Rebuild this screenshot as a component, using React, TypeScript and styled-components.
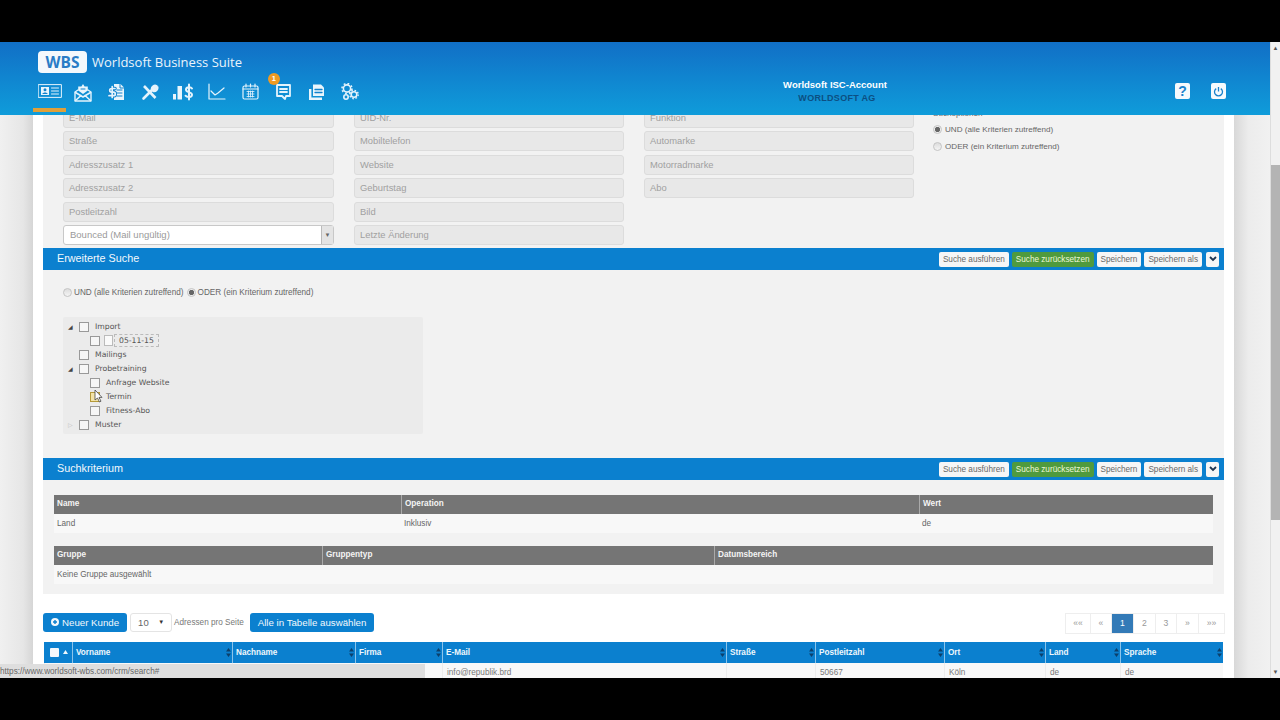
import * as React from 'react';
import styled, { createGlobalStyle } from 'styled-components';

const GlobalStyle = createGlobalStyle`
  html, body { margin: 0; padding: 0; background: #000; }
  body { font-family: "Liberation Sans", Arial, sans-serif; overflow: hidden; }
  * { box-sizing: border-box; }
`;

const Screen = styled.div`
  width: 1280px;
  height: 720px;
  background: #000;
  padding: 42px 0;
`;

const Page = styled.div`
  position: relative;
  height: 636px;
  overflow: hidden;
  display: grid;
  grid-template-columns: 1270px 10px;
  background: #f1f1f1;
`;

const Main = styled.div`
  display: flex;
  flex-direction: column;
  height: 636px;
  overflow: hidden;
`;

const Header = styled.header`
  position: relative;
  z-index: 2;
  flex: none;
  height: 73px;
  display: flex;
  background: linear-gradient(#116fc6, #0f9cda);
`;

const Brand = styled.div`
  width: 735px;
  padding: 9px 0 0 33px;
`;

const LogoRow = styled.div`
  display: flex;
  align-items: center;
  gap: 5px;
  height: 22px;
  padding-left: 5px;
`;

const LogoBadge = styled.div`
  width: 49px;
  height: 22px;
  border-radius: 4px;
  background: #f4f8fc;
  color: #2a7cc6;
  font: 700 15.5px/22px "Open Sans", sans-serif;
  text-align: center;
`;

const LogoTitle = styled.div`
  color: #eaf4fb;
  font: 400 13px/22px "Open Sans", sans-serif;
`;

const Nav = styled.nav`
  display: flex;
  margin-top: 7px;
`;

const NavItem = styled.div<{ $active?: boolean }>`
  position: relative;
  width: 33.4px;
  height: 32px;
  padding-top: 3px;
  display: flex;
  justify-content: center;
  align-items: flex-start;
  border-bottom: 4px solid ${props => (props.$active ? '#dfa03a' : 'transparent')};
`;

const Badge = styled.span`
  position: absolute;
  left: 1px;
  top: -7px;
  width: 12px;
  height: 12px;
  border-radius: 50%;
  background: #ef9a22;
  color: #fff;
  font: 700 7.5px/12px "Liberation Sans", sans-serif;
  text-align: center;
`;

const Account = styled.div`
  width: 200px;
  padding-top: 37px;
  text-align: center;
`;

const AccountName = styled.div`
  color: #fff;
  font-size: 9.5px;
  font-weight: 700;
  line-height: 12px;
`;

const AccountCompany = styled.div`
  margin-top: 1px;
  padding-left: 4px;
  color: #0c4f82;
  font-size: 9px;
  font-weight: 700;
  line-height: 12px;
  letter-spacing: 0.3px;
`;

const HeaderActions = styled.div`
  margin-left: auto;
  padding: 41px 44px 0 0;
  display: flex;
  align-items: flex-start;
  gap: 21px;
`;

const HeaderAction = styled.div`
  width: 15px;
  height: 16px;
  border-radius: 2px;
  background: #f6fafd;
  color: #1b82cc;
  display: flex;
  align-items: center;
  justify-content: center;
  font-size: 14px;
  font-weight: 700;
`;

const Body = styled.div`
  flex: 1;
  display: grid;
  grid-template-columns: 33px 1201px 36px;
`;

const LeftGutter = styled.div`
  background: linear-gradient(to right, #f0f0f0, #e6e6e6 70%, #d6d6d6);
`;

const RightGutter = styled.div`
  background: linear-gradient(to right, #d8d8d8, #ececec 40%, #f1f1f1);
`;

const Panel = styled.main`
  background: #fff;
  padding: 0 10px;
`;

const FormArea = styled.div`
  background: #f2f2f2;
  margin-top: -7px;
  padding: 0 0 3px 20px;
  display: grid;
  grid-template-columns: 271px 270px 270px 1fr;
  column-gap: 20px;
  align-items: start;
`;

const FieldColumn = styled.div`
  display: flex;
  flex-direction: column;
  gap: 3.4px;
`;

const Field = styled.div`
  height: 20px;
  padding-left: 5px;
  border: 1px solid #dcdcdc;
  border-radius: 3px;
  background: #e8e8e8;
  color: #a0a0a0;
  font-size: 9.4px;
  line-height: 18px;
`;

const SelectField = styled.div`
  height: 20px;
  display: flex;
  border: 1px solid #c8c8c8;
  border-radius: 3px;
  background: #fff;
  color: #9a9a9a;
  font-size: 9.5px;
  line-height: 18px;
`;

const SelectText = styled.div`
  flex: 1;
  padding-left: 6px;
`;

const SelectArrow = styled.div`
  width: 12px;
  border-left: 1px solid #bbb;
  background: #e4e4e4;
  color: #666;
  font-size: 6px;
  text-align: center;
`;

const OptionColumn = styled.div`
  margin-left: -1px;
  color: #666;
  font-size: 8.1px;
`;

const OptionTitle = styled.div`
  height: 13px;
  line-height: 11px;
`;

const OptionRow = styled.div`
  display: flex;
  align-items: center;
  gap: 3px;
  height: 17px;
`;

const Radio = styled.span<{ $checked?: boolean }>`
  flex: none;
  width: 9px;
  height: 9px;
  border-radius: 50%;
  border: 1px solid #c4c4c4;
  background: ${props =>
    props.$checked
      ? 'radial-gradient(circle, #666 0, #666 2.2px, #eee 3px)'
      : 'linear-gradient(#ddd, #f4f4f4)'};
`;

const SectionBar = styled.div`
  height: 22px;
  padding: 0 5px 0 14px;
  display: flex;
  align-items: center;
  justify-content: space-between;
  background: #0b80cf;
  color: #f2f8fc;
  font-size: 10.8px;
`;

const SectionTitle = styled.span`
  margin-bottom: 2px;
`;

const BarActions = styled.div`
  display: flex;
  gap: 3px;
  margin-top: 1px;
`;

const BarButton = styled.div<{ $variant?: 'green' }>`
  height: 15px;
  padding: 0 4px;
  border-radius: 2px;
  background: ${props => (props.$variant === 'green' ? '#4f9a3e' : '#f6f6f6')};
  color: ${props => (props.$variant === 'green' ? '#f0f7d8' : '#666')};
  font-size: 8.2px;
  line-height: 15px;
  white-space: nowrap;
`;

const BarCaret = styled.div`
  width: 13px;
  height: 15px;
  margin-left: 1px;
  border-radius: 2px;
  background: #f6f6f6;
  display: flex;
  align-items: center;
  justify-content: center;
`;

const SectionBody = styled.div`
  height: 188px;
  background: #f2f2f2;
  padding: 17px 20px 0;
`;

const LogicRow = styled.div`
  display: flex;
  align-items: center;
  gap: 2px;
  height: 12px;
  color: #666;
  font-size: 8.2px;
`;

const LogicLabel = styled.span`
  margin-right: 1px;
`;

const TreeBox = styled.div`
  position: relative;
  width: 360px;
  height: 117px;
  margin-top: 18px;
  padding-top: 3px;
  border-radius: 2px;
  background: #ebebeb;
`;

const TreeRow = styled.div<{ $level: number }>`
  display: flex;
  align-items: center;
  height: 14px;
  padding-left: ${props => 5 + props.$level * 11}px;
  color: #555;
  font-family: "DejaVu Sans", sans-serif;
  font-size: 7.7px;
  line-height: 16px;
`;

const TreeArrow = styled.span<{ $open?: boolean }>`
  flex: none;
  width: 11px;
  color: ${props => (props.$open ? '#444' : '#bbb')};
  font-size: 6px;
`;

const TreeCheck = styled.span<{ $hover?: boolean }>`
  flex: none;
  width: 10px;
  height: 10px;
  margin-right: 6px;
  border: 1px solid ${props => (props.$hover ? '#b59a3a' : '#999')};
  background: ${props => (props.$hover ? '#f2e3a8' : '#f6f6f6')};
`;

const TreeFile = styled.span`
  flex: none;
  width: 9px;
  height: 11px;
  margin: 0 1px 0 -2px;
  border: 1px solid #bbb;
  background: #fafafa;
`;

const TreeSelected = styled.span`
  padding: 0 4px;
  border: 1px dashed #bbb;
  line-height: 11px;
`;

const Pointer = styled.svg`
  position: absolute;
  left: 31px;
  top: 72px;
`;

const CriteriaBody = styled.div`
  background: #f2f2f2;
  padding: 15px 11px 10px;
  display: flex;
  flex-direction: column;
  gap: 13px;
`;

const GreyHead = styled.div<{ $cols: string }>`
  display: grid;
  grid-template-columns: ${props => props.$cols};
  height: 19px;
  background: #757575;
`;

const GreyHeadCell = styled.div`
  padding-left: 3px;
  border-left: 1px solid #aaa;
  color: #f4f4f4;
  font-size: 8.2px;
  font-weight: 700;
  line-height: 18px;
  &:first-child { border-left: 0; }
`;

const InfoRow = styled.div<{ $cols: string }>`
  display: grid;
  grid-template-columns: ${props => props.$cols};
  height: 19px;
  background: #f8f8f8;
`;

const InfoCell = styled.div`
  padding-left: 3px;
  color: #666;
  font-size: 8.2px;
  line-height: 20px;
`;

const Toolbar = styled.div`
  display: flex;
  align-items: flex-start;
  justify-content: space-between;
  padding-top: 19px;
`;

const ToolGroup = styled.div`
  display: flex;
  align-items: center;
`;

const BlueButton = styled.div`
  height: 19px;
  padding: 0 8px;
  display: flex;
  align-items: center;
  gap: 3px;
  border-radius: 3px;
  background: #0b80cf;
  color: #f2f8fc;
  font-size: 9.7px;
  white-space: nowrap;
`;

const PageSize = styled.div`
  width: 42px;
  height: 19px;
  margin: 0 2px 0 3px;
  padding: 0 7px;
  display: flex;
  align-items: center;
  justify-content: space-between;
  border: 1px solid #e4e4e4;
  border-radius: 3px;
  background: #fff;
  color: #666;
  font-size: 9.5px;
`;

const PageSizeCaret = styled.span`
  color: #333;
  font-size: 6px;
`;

const ToolLabel = styled.span`
  margin-right: 6px;
  color: #777;
  font-size: 8.2px;
`;

const Pager = styled.div`
  display: flex;
  height: 21px;
  margin-right: -1px;
`;

const PagerCell = styled.div<{ $width: number; $active?: boolean }>`
  width: ${props => props.$width}px;
  border: 1px solid #eee;
  border-left-width: 0;
  background: ${props => (props.$active ? '#337ab7' : '#fff')};
  color: ${props => (props.$active ? '#fff' : '#999')};
  font-size: 8.6px;
  line-height: 19px;
  text-align: center;
  &:first-child { border-left-width: 1px; }
`;

const dataCols = '28px 160px 123px 87px 284px 89px 129px 101px 75px 103px';

const DataGrid = styled.div`
  margin: 8px 1px 0;
`;

const DataHead = styled.div`
  display: grid;
  grid-template-columns: ${dataCols};
  height: 21px;
  background: #0b80cf;
`;

const DataHeadCell = styled.div`
  padding: 0 1px 0 3px;
  display: flex;
  align-items: center;
  justify-content: space-between;
  border-left: 1px solid #8cc4ea;
  color: #eef7fc;
  font-size: 8.2px;
  font-weight: 700;
  &:first-child { border-left: 0; padding: 0 4px 0 6px; }
`;

const HeadCheck = styled.span`
  width: 9px;
  height: 9px;
  border-radius: 1px;
  background: #f4f8fc;
`;

const DataRow = styled.div`
  display: grid;
  grid-template-columns: ${dataCols};
  height: 20px;
  background: #f8f8f8;
`;

const DataCell = styled.div`
  padding-left: 4px;
  border-left: 1px solid #ececec;
  color: #777;
  font-size: 8.2px;
  line-height: 19px;
`;

const Scrollbar = styled.div`
  display: flex;
  flex-direction: column;
  align-items: center;
  height: 636px;
  background: #f1f1f1;
  border-left: 1px solid #ddd;
`;

const ScrollArrow = styled.div`
  height: 12px;
  color: #555;
  font-size: 6px;
  line-height: 12px;
`;

const ScrollThumb = styled.div`
  width: 9px;
  height: 355px;
  margin-top: 111px;
  background: #b4b4b4;
`;

const ScrollEnd = styled(ScrollArrow)`
  margin-top: auto;
`;

const StatusBar = styled.div`
  position: absolute;
  z-index: 3;
  left: 0;
  bottom: 0;
  width: 425px;
  height: 14px;
  background: #dedede;
  color: #666;
  font-size: 8.2px;
  line-height: 16px;
  overflow: hidden;
`;

const IconSvg = styled.svg`
  fill: none;
  stroke: #e4f3fc;
  stroke-width: 1.2;
  stroke-linejoin: round;
  stroke-linecap: round;
`;

const white = '#e9f5fc';
const blue = '#1182cc';

const navIcons: React.ReactNode[] = [
  <IconSvg key="card" width="24" height="16" viewBox="0 0 24 16">
    <rect x="0.6" y="1.6" width="22.8" height="12.8" strokeWidth="1" />
    <rect x="3" y="4" width="8" height="8" fill={white} stroke="none" />
    <path d="M7 5.2a1.5 1.5 0 0 1 0 3 1.5 1.5 0 0 1 0-3zM4.3 11c.5-2 5-2 5.4 0z" fill={blue} stroke="none" />
    <path d="M13.5 5h7M13.5 8h7M13.5 11h7" strokeWidth="1" />
  </IconSvg>,
  <IconSvg key="mail" width="18" height="19" viewBox="0 0 18 19">
    <path d="M1 9l3-2M17 9l-3-2M1 9v9h16V9" strokeWidth="1.4" />
    <path d="M9 1l1.6 2.4h3.2v4.2L9 11 4.2 7.6V3.4h3.2z" fill={white} stroke="none" />
    <path d="M1.5 9.5L9 14l7.5-4.5M1.5 17.5l5.5-5M16.5 17.5l-5.5-5" strokeWidth="1.6" />
    <path d="M7 6h4" stroke={blue} strokeWidth="1" />
  </IconSvg>,
  <IconSvg key="doc" width="17" height="18" viewBox="0 0 17 18">
    <path d="M6 1h6.5L16 4.5V17H6z" fill={white} stroke="none" />
    <path d="M9 7h5M9 10h5M9 13h5M12 1.5V5h3.5" stroke={blue} strokeWidth="1" />
    <path d="M7 5.5H3.5a1.8 1.8 0 0 0 0 3.6h2a1.8 1.8 0 0 1 0 3.6H1" stroke={blue} strokeWidth="3.6" />
    <path d="M7 5.5H3.5a1.8 1.8 0 0 0 0 3.6h2a1.8 1.8 0 0 1 0 3.6H1M4.2 3.5v11" strokeWidth="1.7" />
  </IconSvg>,
  <IconSvg key="tools" width="18" height="18" viewBox="0 0 18 18">
    <g strokeWidth="2.6">
      <path d="M2.5 15.5L11 7" />
      <path d="M3 3l11.5 12" strokeLinecap="butt" />
      <path d="M10.5 6.5a3.6 3.6 0 0 1 5.3-3.6L13.6 5l1 1 2-2.2a3.6 3.6 0 0 1-4.6 4.4" strokeWidth="1.6" fill={white} />
    </g>
  </IconSvg>,
  <IconSvg key="money" width="22" height="18" viewBox="0 0 22 18">
    <rect x="1" y="11" width="3" height="5.5" fill={white} stroke="none" />
    <rect x="5.5" y="3" width="4.5" height="13.5" fill={white} stroke="none" />
    <path d="M20 5.5c-1-1.6-6-2-6 1.2 0 3 6 1.8 6 5 0 3-5 3-6.5 1M17 1.5v15" strokeWidth="2" />
  </IconSvg>,
  <IconSvg key="chart" width="18" height="17" viewBox="0 0 18 17">
    <path d="M1 1v15h16" />
    <path d="M3 8l4 4 3-2 6-5" />
  </IconSvg>,
  <IconSvg key="calendar" width="17" height="17" viewBox="0 0 17 17">
    <rect x="1" y="3" width="15" height="13" rx="1.5" />
    <path d="M4 1v3M8.5 1v3M13 1v3M1 6h15" />
    <path d="M5 8.5h7M5 11h7M5 13.5h7M6.5 8v6M8.5 8v6M10.5 8v6" strokeWidth="0.8" />
  </IconSvg>,
  <IconSvg key="chat" width="17" height="18" viewBox="0 0 17 18">
    <g strokeWidth="1.8">
      <path d="M2 2h13v11h-4l-1 3-3-3H2z" />
      <path d="M5 6h7M5 9h7" />
    </g>
  </IconSvg>,
  <IconSvg key="files" width="18" height="18" viewBox="0 0 18 18">
    <path d="M1 6h2.4v8.6H14V17H1z" fill={white} stroke="none" />
    <path d="M5 1.5h8l3 3V13H5z" fill={white} stroke="none" />
    <path d="M7 6.5h7M7 9.5h7" stroke={blue} strokeWidth="1.3" />
  </IconSvg>,
  <IconSvg key="gears" width="18" height="18" viewBox="0 0 18 18">
    <g strokeLinecap="butt">
      <circle cx="6" cy="5.5" r="3.6" strokeWidth="1.6" />
      <circle cx="6" cy="5.5" r="5" strokeWidth="1.6" strokeDasharray="1.8 2.1" />
      <circle cx="13" cy="11.5" r="2.8" strokeWidth="1.6" />
      <circle cx="13" cy="11.5" r="4.2" strokeWidth="1.4" strokeDasharray="1.6 1.7" />
      <circle cx="5" cy="14" r="2.2" strokeWidth="1.6" />
    </g>
  </IconSvg>,
];

const SortIcon = () => (
  <svg width="5" height="9" viewBox="0 0 5 9">
    <path d="M2.5 0L5 3.5H0zM2.5 9L0 5.5h5z" fill="#0c3f6b" />
  </svg>
);

const CaretDown = () => (
  <svg width="8" height="6" viewBox="0 0 8 6">
    <path d="M1 1l3 3 3-3" fill="none" stroke="#1d3550" strokeWidth="1.8" />
  </svg>
);

const SectionActions = () => (
  <BarActions>
    <BarButton>Suche ausführen</BarButton>
    <BarButton $variant="green">Suche zurücksetzen</BarButton>
    <BarButton>Speichern</BarButton>
    <BarButton>Speichern als</BarButton>
    <BarCaret>
      <CaretDown />
    </BarCaret>
  </BarActions>
);

const column1 = ['E-Mail', 'Straße', 'Adresszusatz 1', 'Adresszusatz 2', 'Postleitzahl'];
const column2 = ['UID-Nr.', 'Mobiltelefon', 'Website', 'Geburtstag', 'Bild', 'Letzte Änderung'];
const column3 = ['Funktion', 'Automarke', 'Motorradmarke', 'Abo'];

const criteriaCols = '347px 518px 294px';
const groupCols = '268px 392px 499px';

const dataHeads = ['Vorname', 'Nachname', 'Firma', 'E-Mail', 'Straße', 'Postleitzahl', 'Ort', 'Land', 'Sprache'];
const dataValues = ['', '', '', '', 'info@republik.brd', '', '50667', 'Köln', 'de', 'de'];

const pager: [string, number, boolean?][] = [
  ['««', 26],
  ['«', 21],
  ['1', 22, true],
  ['2', 22],
  ['3', 21],
  ['»', 22],
  ['»»', 26],
];

export default function App() {
  return (
    <Screen>
      <GlobalStyle />
      <Page>
        <Main>
          <Header>
            <Brand>
              <LogoRow>
                <LogoBadge>WBS</LogoBadge>
                <LogoTitle>Worldsoft Business Suite</LogoTitle>
              </LogoRow>
              <Nav>
                {navIcons.map((icon, i) => (
                  <NavItem key={i} $active={i === 0}>
                    {i === 7 && <Badge>1</Badge>}
                    {icon}
                  </NavItem>
                ))}
              </Nav>
            </Brand>
            <Account>
              <AccountName>Worldsoft ISC-Account</AccountName>
              <AccountCompany>WORLDSOFT AG</AccountCompany>
            </Account>
            <HeaderActions>
              <HeaderAction>?</HeaderAction>
              <HeaderAction>
                <svg width="11" height="11" viewBox="0 0 11 11">
                  <path d="M3.2 2.6a4 4 0 1 0 4.6 0M5.5 1v4.5" fill="none" stroke="#1b82cc" strokeWidth="1.3" />
                </svg>
              </HeaderAction>
            </HeaderActions>
          </Header>
          <Body>
            <LeftGutter />
            <Panel>
              <FormArea>
                <FieldColumn>
                  {column1.map(label => (
                    <Field key={label}>{label}</Field>
                  ))}
                  <SelectField>
                    <SelectText>Bounced (Mail ungültig)</SelectText>
                    <SelectArrow>▼</SelectArrow>
                  </SelectField>
                </FieldColumn>
                <FieldColumn>
                  {column2.map(label => (
                    <Field key={label}>{label}</Field>
                  ))}
                </FieldColumn>
                <FieldColumn>
                  {column3.map(label => (
                    <Field key={label}>{label}</Field>
                  ))}
                </FieldColumn>
                <OptionColumn>
                  <OptionTitle>Suchoptionen</OptionTitle>
                  <OptionRow>
                    <Radio $checked />
                    UND (alle Kriterien zutreffend)
                  </OptionRow>
                  <OptionRow>
                    <Radio />
                    ODER (ein Kriterium zutreffend)
                  </OptionRow>
                </OptionColumn>
              </FormArea>

              <SectionBar>
                <SectionTitle>Erweiterte Suche</SectionTitle>
                <SectionActions />
              </SectionBar>
              <SectionBody>
                <LogicRow>
                  <Radio />
                  <LogicLabel>UND (alle Kriterien zutreffend)</LogicLabel>
                  <Radio $checked />
                  <LogicLabel>ODER (ein Kriterium zutreffend)</LogicLabel>
                </LogicRow>
                <TreeBox>
                  <TreeRow $level={0}>
                    <TreeArrow $open>◢</TreeArrow>
                    <TreeCheck />
                    Import
                  </TreeRow>
                  <TreeRow $level={1}>
                    <TreeArrow />
                    <TreeCheck />
                    <TreeFile />
                    <TreeSelected>05-11-15</TreeSelected>
                  </TreeRow>
                  <TreeRow $level={0}>
                    <TreeArrow />
                    <TreeCheck />
                    Mailings
                  </TreeRow>
                  <TreeRow $level={0}>
                    <TreeArrow $open>◢</TreeArrow>
                    <TreeCheck />
                    Probetraining
                  </TreeRow>
                  <TreeRow $level={1}>
                    <TreeArrow />
                    <TreeCheck />
                    Anfrage Website
                  </TreeRow>
                  <TreeRow $level={1}>
                    <TreeArrow />
                    <TreeCheck $hover />
                    Termin
                  </TreeRow>
                  <TreeRow $level={1}>
                    <TreeArrow />
                    <TreeCheck />
                    Fitness-Abo
                  </TreeRow>
                  <TreeRow $level={0}>
                    <TreeArrow>▷</TreeArrow>
                    <TreeCheck />
                    Muster
                  </TreeRow>
                  <Pointer width="9" height="14" viewBox="0 0 9 14">
                    <path d="M1 1v10l2.5-2 2 4 1.5-.8-2-3.8h3z" fill="#fff" stroke="#444" strokeWidth="0.8" />
                  </Pointer>
                </TreeBox>
              </SectionBody>

              <SectionBar>
                <SectionTitle>Suchkriterium</SectionTitle>
                <SectionActions />
              </SectionBar>
              <CriteriaBody>
                <div>
                  <GreyHead $cols={criteriaCols}>
                    <GreyHeadCell>Name</GreyHeadCell>
                    <GreyHeadCell>Operation</GreyHeadCell>
                    <GreyHeadCell>Wert</GreyHeadCell>
                  </GreyHead>
                  <InfoRow $cols={criteriaCols}>
                    <InfoCell>Land</InfoCell>
                    <InfoCell>Inklusiv</InfoCell>
                    <InfoCell>de</InfoCell>
                  </InfoRow>
                </div>
                <div>
                  <GreyHead $cols={groupCols}>
                    <GreyHeadCell>Gruppe</GreyHeadCell>
                    <GreyHeadCell>Gruppentyp</GreyHeadCell>
                    <GreyHeadCell>Datumsbereich</GreyHeadCell>
                  </GreyHead>
                  <InfoRow $cols={groupCols}>
                    <InfoCell>Keine Gruppe ausgewählt</InfoCell>
                  </InfoRow>
                </div>
              </CriteriaBody>

              <Toolbar>
                <ToolGroup>
                  <BlueButton>
                    <svg width="8" height="8" viewBox="0 0 8 8">
                      <circle cx="4" cy="4" r="4" fill="#f2f8fc" />
                      <path d="M4 2v4M2 4h4" stroke="#0b80cf" strokeWidth="1.4" />
                    </svg>
                    Neuer Kunde
                  </BlueButton>
                  <PageSize>
                    10
                    <PageSizeCaret>▼</PageSizeCaret>
                  </PageSize>
                  <ToolLabel>Adressen pro Seite</ToolLabel>
                  <BlueButton>Alle in Tabelle auswählen</BlueButton>
                </ToolGroup>
                <Pager>
                  {pager.map(([label, width, active]) => (
                    <PagerCell key={label} $width={width} $active={active}>
                      {label}
                    </PagerCell>
                  ))}
                </Pager>
              </Toolbar>

              <DataGrid>
                <DataHead>
                  <DataHeadCell>
                    <HeadCheck />
                    <svg width="5" height="4" viewBox="0 0 5 4">
                      <path d="M2.5 0L5 4H0z" fill="#eef7fc" />
                    </svg>
                  </DataHeadCell>
                  {dataHeads.map(head => (
                    <DataHeadCell key={head}>
                      {head}
                      <SortIcon />
                    </DataHeadCell>
                  ))}
                </DataHead>
                <DataRow>
                  {dataValues.map((value, i) => (
                    <DataCell key={i}>{value}</DataCell>
                  ))}
                </DataRow>
              </DataGrid>
            </Panel>
            <RightGutter />
          </Body>
        </Main>
        <Scrollbar>
          <ScrollArrow>▲</ScrollArrow>
          <ScrollThumb />
          <ScrollEnd>▼</ScrollEnd>
        </Scrollbar>
        <StatusBar>https://www.worldsoft-wbs.com/crm/search#</StatusBar>
      </Page>
    </Screen>
  );
}
